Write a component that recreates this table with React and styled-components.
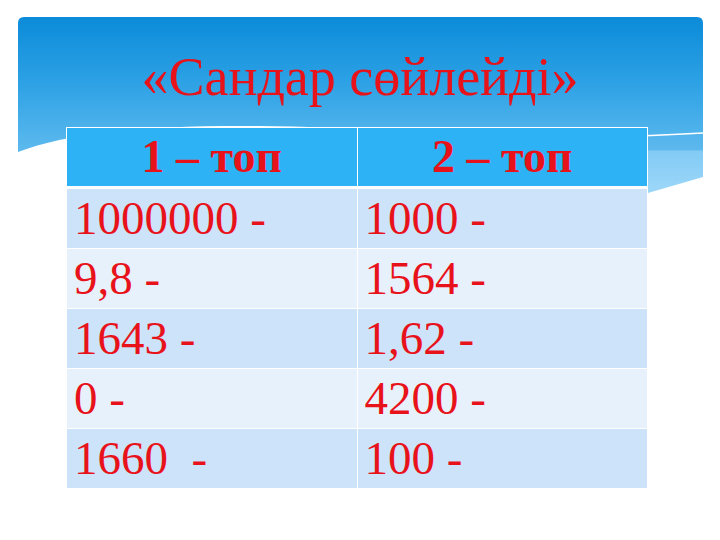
import React from 'react';
import styled, {createGlobalStyle} from "styled-components";

const GlobalStyle = createGlobalStyle`
  html, body {
    margin: 0;
    padding: 0;
    background: #fff;
  }
`

const Slide = styled.div`
  position: relative;
  width: 720px;
  height: 540px;
  overflow: hidden;
  background: #fff;
  font-family: "Liberation Serif", "Times New Roman", serif;
`

const Backdrop = styled.svg`
  position: absolute;
  top: 0;
  left: 0;
  z-index: 0;
`

const Content = styled.div`
  position: relative;
  z-index: 1;
  display: flex;
  flex-direction: column;
  padding-top: 46px;
`

const Title = styled.h1`
  margin: 0;
  text-align: center;
  font-weight: normal;
  font-size: 54px;
  line-height: 62px;
  color: #e8121a;
`

const Table = styled.table`
  margin: 19px 0 0 66px;
  width: 582px;
  border-collapse: collapse;
  table-layout: fixed;
  color: #e8121a;
`

const HeadCell = styled.th`
  height: 58px;
  padding: 0;
  background: #2db2f6;
  border: 1px solid #fff;
  border-bottom: 3px solid #fff;
  font-size: 46px;
  font-weight: bold;
  text-align: center;
  line-height: 1;
`

const Row = styled.tr`
  background: ${p => p.$odd ? '#cde3fa' : '#e7f1fc'};
`

const Cell = styled.td`
  height: 59px;
  padding: 0 0 0 7px;
  border: 1px solid #fff;
  font-size: 47px;
  line-height: 1;
  white-space: pre;
`

const rows = [
    ['1000000 -', '1000 -'],
    ['9,8 -', '1564 -'],
    ['1643 -', '1,62 -'],
    ['0 -', '4200 -'],
    ['1660  -', '100 -'],
]

const Banner = () => (
    <Backdrop width="720" height="540" viewBox="0 0 720 540">
        <defs>
            <linearGradient id="sky" x1="0" y1="17" x2="0" y2="152" gradientUnits="userSpaceOnUse">
                <stop offset="0" stopColor="#0b8bd9"/>
                <stop offset="0.5" stopColor="#2ea2e5"/>
                <stop offset="1" stopColor="#5dbaee"/>
            </linearGradient>
            <linearGradient id="band" x1="0" y1="133" x2="0" y2="193" gradientUnits="userSpaceOnUse">
                <stop offset="0" stopColor="#52b3ec"/>
                <stop offset="0.28" stopColor="#5cb8ed"/>
                <stop offset="0.3" stopColor="#82cbf5"/>
                <stop offset="1" stopColor="#9dd7f8"/>
            </linearGradient>
        </defs>
        <path
            d="M18,23 Q18,17 24,17 L697,17 Q703,17 703,23 L703,133 C560,142 420,128 260,126 C150,125 70,132 18,152 Z"
            fill="url(#sky)"/>
        <path d="M360,140 C480,140 600,139 703,133 L703,177 L648,193 L360,193 Z" fill="url(#band)"/>
        <path d="M360,140 C480,140 600,139 703,133" fill="none" stroke="#fff" strokeWidth="1.5"/>
    </Backdrop>
)

const App = () => {
    return (
        <Slide>
            <GlobalStyle/>
            <Banner/>
            <Content>
                <Title>«Сандар сөйлейді»</Title>
                <Table>
                    <thead>
                    <tr>
                        <HeadCell>1 – топ</HeadCell>
                        <HeadCell>2 – топ</HeadCell>
                    </tr>
                    </thead>
                    <tbody>
                    {rows.map((r, i) => (
                        <Row key={i} $odd={i % 2 === 0}>
                            <Cell>{r[0]}</Cell>
                            <Cell>{r[1]}</Cell>
                        </Row>
                    ))}
                    </tbody>
                </Table>
            </Content>
        </Slide>
    );
};

export default App;
